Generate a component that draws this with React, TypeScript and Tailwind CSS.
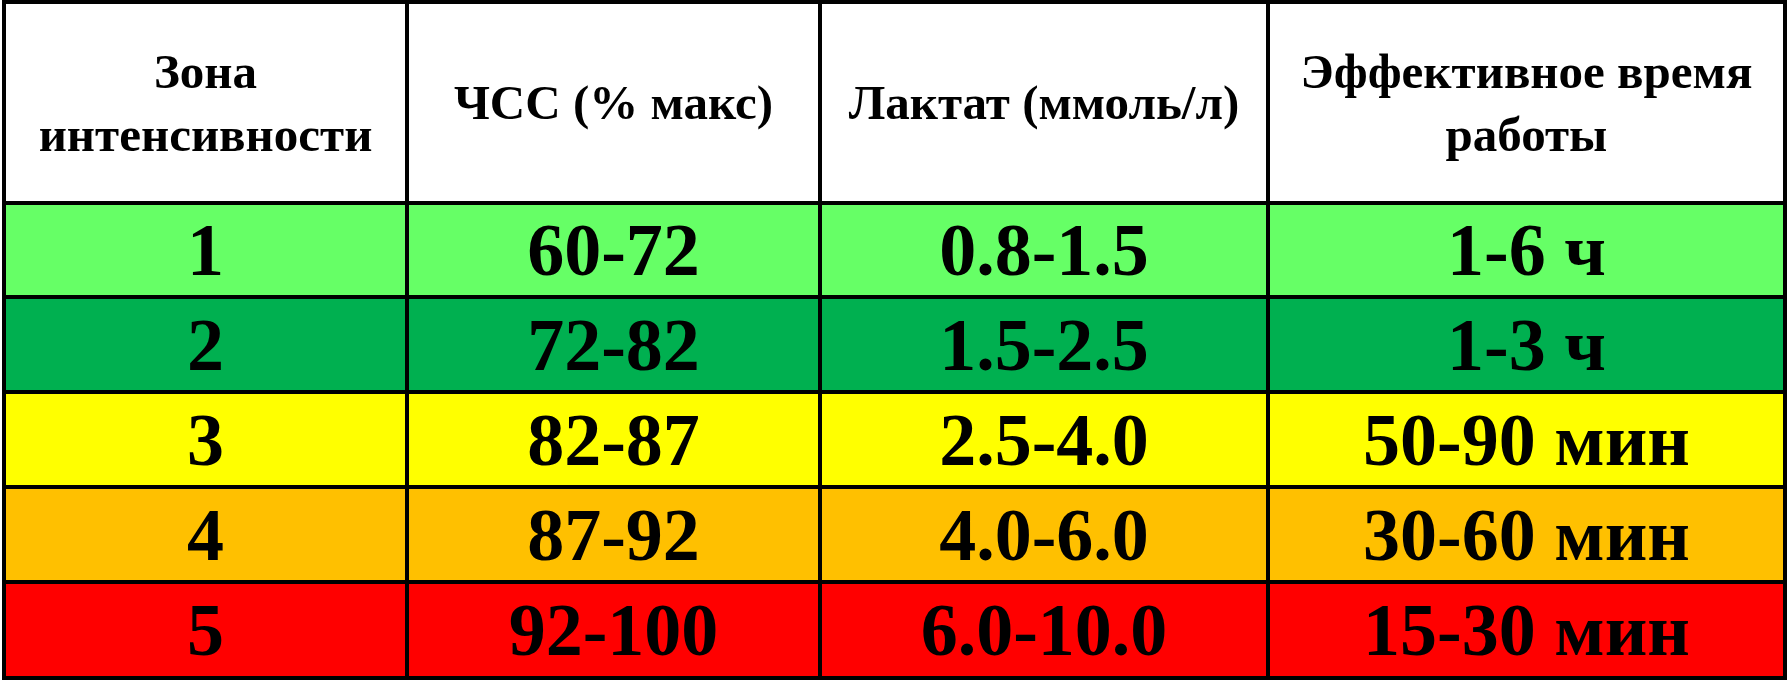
import React from "react";

const rows = [
  { bg: "bg-[#66ff66]", cells: ["1", "60-72", "0.8-1.5", "1-6 ч"] },
  { bg: "bg-[#00b050]", cells: ["2", "72-82", "1.5-2.5", "1-3 ч"] },
  { bg: "bg-[#ffff00]", cells: ["3", "82-87", "2.5-4.0", "50-90 мин"] },
  { bg: "bg-[#ffc000]", cells: ["4", "87-92", "4.0-6.0", "30-60 мин"] },
  { bg: "bg-[#ff0000]", cells: ["5", "92-100", "6.0-10.0", "15-30 мин"] },
];

const headers = [
  ["Зона", "интенсивности"],
  ["ЧСС (% макс)"],
  ["Лактат (ммоль/л)"],
  ["Эффективное время", "работы"],
];

export default function App() {
  return (
    <div className="w-[1787px] h-[681px] bg-white overflow-hidden" style={{ fontFamily: '"Liberation Serif", "Times New Roman", serif' }}>
      <div className="ml-[2px] w-[1785px] bg-black p-[4px] grid gap-[4px] grid-cols-[399px_409px_444px_513px] grid-rows-[197px_90px_91px_91px_91px_92px]">
        {headers.map((h, i) => (
          <div key={i} className="bg-white flex items-center justify-center text-center">
            <div className="font-bold text-black text-[49px] leading-[63px]">
              {h.map((line, j) => (
                <div key={j}>{line}</div>
              ))}
            </div>
          </div>
        ))}
        {rows.map((r, i) =>
          r.cells.map((c, j) => (
            <div key={`${i}-${j}`} className={`${r.bg} flex items-center justify-center`}>
              <span className="font-bold text-black text-[74px] leading-none">{c}</span>
            </div>
          ))
        )}
      </div>
    </div>
  );
}
